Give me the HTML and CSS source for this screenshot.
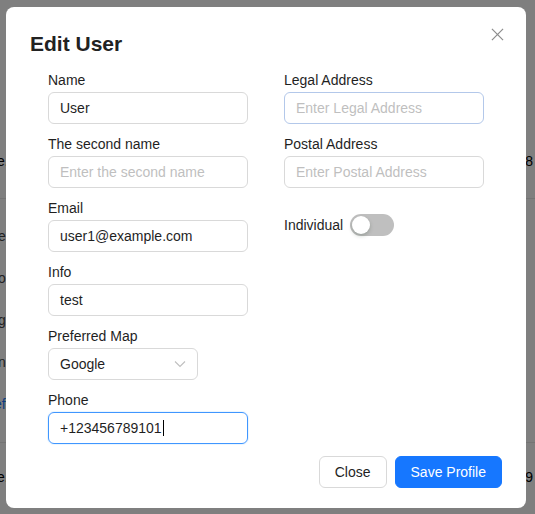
FILE: index.html
```html
<!DOCTYPE html>
<html>
<head>
<meta charset="utf-8">
<link rel="stylesheet" href="styles.css">
</head>
<body>
<div class="page">
  <div class="row"><span class="lt">e.</span><span class="rt">8</span></div>
  <div class="line l1"></div>
  <div class="side">
    <span>e</span><span>o</span><span>g</span><span>n</span><span class="blue">ef</span>
  </div>
  <div class="line l2"></div>
  <div class="row"><span class="lt">e.</span><span class="rt">9</span></div>
</div>
<div class="overlay"></div>
<div class="modal">
  <div class="head">
    <h1 class="title">Edit User</h1>
    <svg class="x" width="14" height="14" viewBox="0 0 14 14"><path d="M1 1L13 13M13 1L1 13" stroke="#8c8c8c" stroke-width="1.3"/></svg>
  </div>
  <div class="form">
    <div class="col">
      <div class="field"><label>Name</label><div class="input">User</div></div>
      <div class="field"><label>The second name</label><div class="input ph">Enter the second name</div></div>
      <div class="field"><label>Email</label><div class="input">user1@example.com</div></div>
      <div class="field"><label>Info</label><div class="input">test</div></div>
      <div class="field"><label>Preferred Map</label><div class="input select">Google<svg width="12" height="8" viewBox="0 0 12 8"><path d="M1 1.5L6 6.5L11 1.5" fill="none" stroke="#bfbfbf" stroke-width="1.1"/></svg></div></div>
      <div class="field"><label>Phone</label><div class="input focus">+123456789101<span class="caret"></span></div></div>
    </div>
    <div class="col">
      <div class="field"><label>Legal Address</label><div class="input ph hover">Enter Legal Address</div></div>
      <div class="field"><label>Postal Address</label><div class="input ph">Enter Postal Address</div></div>
      <div class="toggle-row"><span>Individual</span><span class="switch"><span class="knob"></span></span></div>
    </div>
  </div>
  <div class="footer">
    <button class="btn">Close</button>
    <button class="btn primary">Save Profile</button>
  </div>
</div>
</body>
</html>
```
FILE: styles.css
```css
* { box-sizing: border-box; }
html, body { margin: 0; padding: 0; }
body {
  width: 535px; height: 514px; overflow: hidden;
  background: #fff;
  font-family: "Liberation Sans", Arial, sans-serif;
  color: rgba(0,0,0,0.88);
}
.page { padding-top: 150px; }
.row { display: flex; justify-content: space-between; height: 22px; line-height: 22px; font-size: 14px; color: #000; padding-right: 2px; }
.row .lt { margin-left: -3px; }
.line { height: 1px; background: #e8e8e8; }
.l1 { margin: 26px 0 0; }
.l2 { margin: 27px 0 23px; }
.side { display: flex; flex-direction: column; align-items: flex-start; gap: 20px; font-size: 14px; line-height: 22px; color: #444; margin-left: -2px; padding-top: 26px; }
.side span { height: 22px; }
.side .blue { color: #1677ff; margin-left: -4px; }
.overlay { position: fixed; inset: 0; background: rgba(0,0,0,0.5); }
.modal {
  position: fixed; left: 6px; top: 7px; width: 520px; height: 501px;
  background: #fff; border-radius: 8px;
  padding: 20px 24px;
  display: flex; flex-direction: column;
}
.head { display: flex; justify-content: space-between; align-items: flex-start; flex: none; }
.title { margin: 4px 0 0 0; font-size: 21px; font-weight: 700; color: #222; line-height: 26px; }
.x { flex: none; width: 13px; height: 13px; margin: 1px -2px 0 0; }
.form { display: flex; gap: 36px; padding: 0 18px; margin-top: 15px; flex: none; }
.col { width: 200px; flex: none; display: flex; flex-direction: column; gap: 12px; }
.field { display: flex; flex-direction: column; gap: 3px; flex: none; }
label { font-size: 14px; line-height: 17px; color: #1f1f1f; }
.input {
  flex: none;
  height: 32px; border: 1px solid #d9d9d9; border-radius: 6px;
  padding: 0 11px; font-size: 14px; line-height: 30px; color: #1f1f1f;
  display: flex; align-items: center;
}
.input.ph { color: #bfbfbf; }
.input.hover { border-color: #b3c8ea; }
.input.focus { border-color: #4096ff; box-shadow: 0 0 0 1px rgba(5,145,255,0.08); }
.select { width: 150px; justify-content: space-between; }
.caret { display: inline-block; width: 1px; height: 16px; background: #000; margin-left: 1px; }
.toggle-row { display: flex; align-items: center; gap: 7px; margin-top: 14px; font-size: 14px; color: #1f1f1f; height: 22px; }
.switch { width: 44px; height: 22px; border-radius: 11px; background: #bfbfbf; position: relative; display: inline-block; }
.knob { position: absolute; left: 2px; top: 2px; width: 18px; height: 18px; border-radius: 50%; background: #fff; box-shadow: 0 2px 4px rgba(0,35,11,0.2); }
.footer { margin-top: auto; display: flex; justify-content: flex-end; gap: 8px; flex: none; }
.btn {
  height: 32px; padding: 0 15px; border-radius: 6px; border: 1px solid #d9d9d9;
  background: #fff; font-family: "Liberation Sans", Arial, sans-serif; font-size: 14px; color: #1f1f1f;
}
.btn.primary { background: #1677ff; border-color: #1677ff; color: #fff; }
```
